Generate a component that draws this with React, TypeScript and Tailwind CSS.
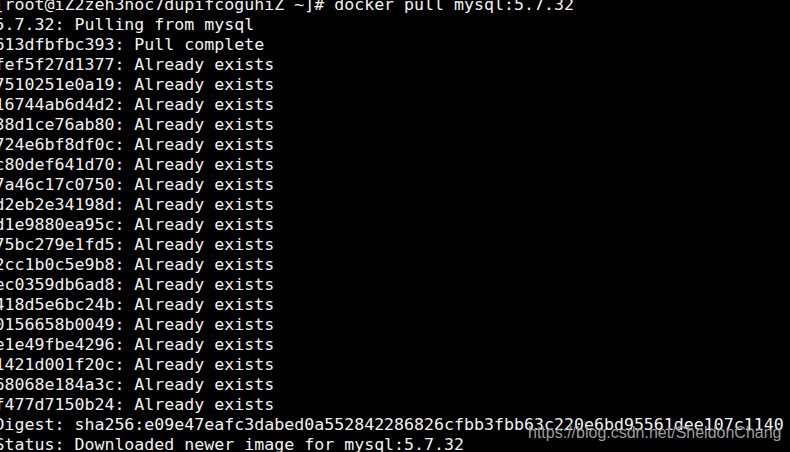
import React from "react";

const lines = [
  "[root@iZ2zeh3noc7dupifcoguhiZ ~]# docker pull mysql:5.7.32",
  "5.7.32: Pulling from mysql",
  "613dfbfbc393: Pull complete",
  "fef5f27d1377: Already exists",
  "7510251e0a19: Already exists",
  "16744ab6d4d2: Already exists",
  "38d1ce76ab80: Already exists",
  "724e6bf8df0c: Already exists",
  "c80def641d70: Already exists",
  "7a46c17c0750: Already exists",
  "d2eb2e34198d: Already exists",
  "d1e9880ea95c: Already exists",
  "75bc279e1fd5: Already exists",
  "2cc1b0c5e9b8: Already exists",
  "ec0359db6ad8: Already exists",
  "418d5e6bc24b: Already exists",
  "0156658b0049: Already exists",
  "e1e49fbe4296: Already exists",
  "1421d001f20c: Already exists",
  "68068e184a3c: Already exists",
  "f477d7150b24: Already exists",
  "Digest: sha256:e09e47eafc3dabed0a552842286826cfbb3fbb63c220e6bd95561dee107c1140",
  "Status: Downloaded newer image for mysql:5.7.32",
];

export default function App() {
  return (
    <div className="relative w-[790px] h-[452px] overflow-hidden bg-black">
      <div className="flex flex-col mt-[-4.7px] ml-[-5.5px] text-[16.6px] leading-[20px] text-[#f2f2f2] whitespace-pre font-['DejaVu_Sans_Mono',monospace]">
        {lines.map((l, i) => (
          <div key={i}>{l}</div>
        ))}
      </div>
      <div className="absolute left-[528px] top-[423px] text-[16px] leading-[20px] text-[#9c9c9c] whitespace-nowrap font-['Liberation_Sans',Arial,sans-serif]">
        https://blog.csdn.net/SheldonChang
      </div>
    </div>
  );
}
